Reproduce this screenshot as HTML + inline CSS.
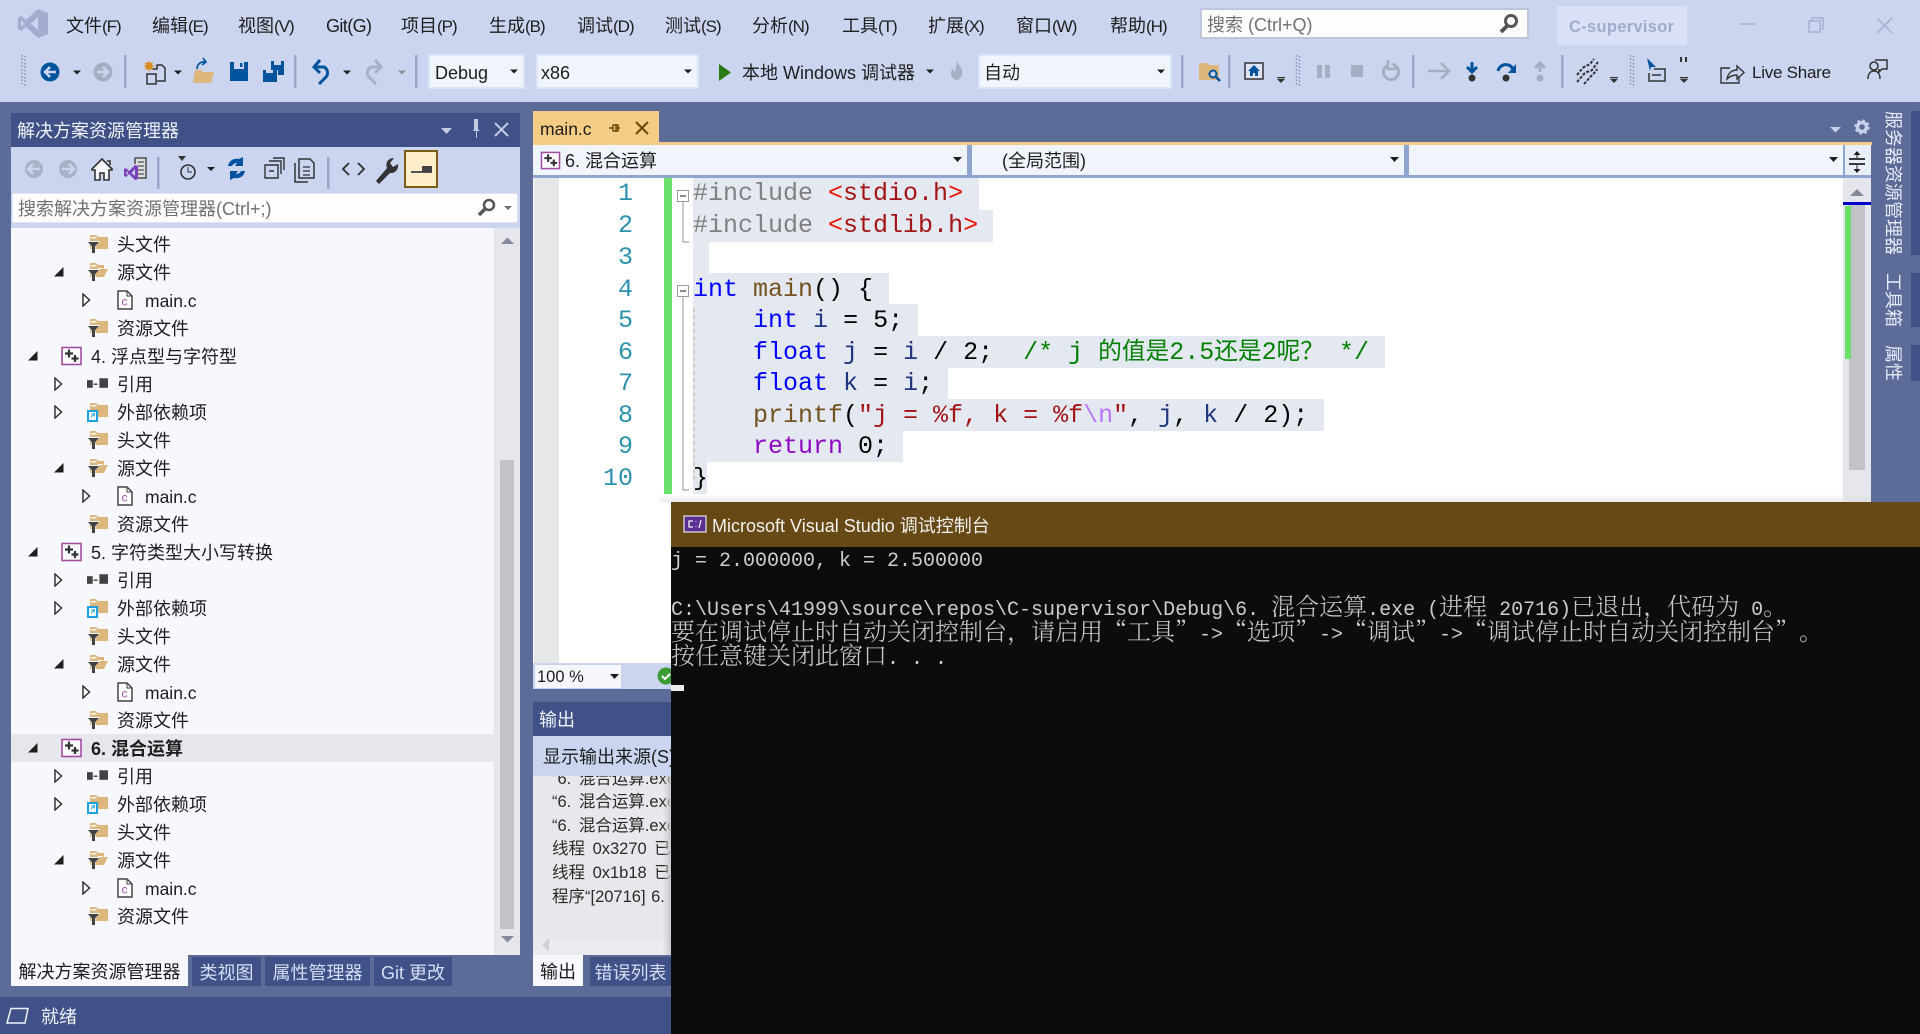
<!DOCTYPE html>
<html lang="zh-CN"><head><meta charset="utf-8"><title>C-supervisor</title>
<style>
html,body{margin:0;padding:0;width:1920px;height:1034px;overflow:hidden;background:#5d6b99}
body{position:relative;font-family:"Liberation Sans","Noto Sans CJK SC",sans-serif;font-size:18px;color:#1e1e1e;text-spacing-trim:space-all}
div,svg,b.a{position:absolute}
.t{position:absolute;white-space:nowrap;line-height:28px;height:28px;transform:translateY(1px)}
.t u{text-decoration:none;font-size:17px;letter-spacing:-1px}
.t u.gt{font-size:18px;letter-spacing:-.6px}
.m{top:11px}
.w{color:#f0f3fb}
.r{left:0;width:483px;height:28px}
.r svg{position:absolute;overflow:visible}
.r span{position:absolute;top:1px;line-height:28px;white-space:nowrap}
.a1{left:17px;top:9px}.a2{left:43px;top:9px}.a3{left:71px;top:7px}
.r .a2.c2{top:7px}
.i1{left:76px;top:4px;width:21px;height:20px}
.i2{left:106px;top:4px;width:16px;height:20px}
.ip{left:50px;top:4px;width:21px;height:20px}
.l1{left:106px}.l2{left:134px;font-size:17.5px}.lp{left:80px}
.sel{position:absolute;background:#e4e8f0;left:693px;height:32px}
.ln{position:absolute;left:590px;width:43px;text-align:right;color:#2b91af;font:25px/31.5px "Liberation Mono",monospace}
.cd{position:absolute;left:693px;white-space:pre;font:25px/31.5px "Liberation Mono","Noto Sans CJK SC",monospace;color:#000}
.cd i{font-style:normal;font-family:"Noto Sans CJK SC",sans-serif;font-size:23.7px;line-height:0}
.g{color:#808080}.rd{color:#e51400}.s{color:#a31515}.k{color:#0000ff}.f{color:#74531f}.v{color:#1f377f}.c{color:#008000}.p{color:#8f08c4}.e{color:#b776fb}
.tab{position:absolute;background:#3f5187;color:#d6def5;top:957px;height:29px;line-height:33px;text-align:center;white-space:nowrap}
.o{position:absolute;left:19px;white-space:nowrap;font-size:16.5px;line-height:24px;word-spacing:3px;color:#2a2a2a;transform:translateY(1px)}
.con{position:absolute;left:0;white-space:pre;font:20px/24px "Liberation Mono",monospace;color:#cccccc}
.con i{font-style:normal;font-family:"Noto Serif CJK SC",serif;font-size:24px;font-weight:300;line-height:0}
.vt{position:absolute;left:1881px;writing-mode:vertical-rl;text-orientation:sideways;line-height:24px;color:#e8ecf8;white-space:nowrap}
.st{position:absolute;left:1911px;width:9px;background:#3f5187}
</style></head><body>
<svg width="0" height="0" style="position:absolute"><defs>
<symbol id="ff" viewBox="0 0 21 20"><path d="M3 1h6l2 2h10v12H3z" fill="#dcb67a"/><path d="M4 3h5l1 1.500H4z" fill="#f6f8fe"/><path d="M0 7h13L8.500 12.500V20h-4v-7.500z" fill="#f6f8fe"/><path d="M1 8h11L8 12.500V19H5v-6.500z" fill="#424242"/></symbol>
<symbol id="fo" viewBox="0 0 21 20"><path d="M3 1h6l2 2h6v4h4l-4 8H3z" fill="#dcb67a"/><path d="M4 3h5l1 1.500H4zM11 6h5v1h-5z" fill="#f6f8fe"/><path d="M0 7h13L8.500 12.500V20h-4v-7.500z" fill="#f6f8fe"/><path d="M1 8h11L8 12.500V19H5v-6.500z" fill="#424242"/></symbol>
<symbol id="fe" viewBox="0 0 21 20"><path d="M3 1h6l2 2h10v12H3z" fill="#dcb67a"/><path d="M4 3h5l1 1.500H4z" fill="#f6f8fe"/><rect x="0" y="8" width="11" height="11" fill="#f6f8fe"/><rect x="1" y="9" width="9" height="10" fill="#fff" stroke="#1ba1e2" stroke-width="2"/><path d="M4 15l3-3M4.500 11.800H7.300V14.500" stroke="#1ba1e2" fill="none"/></symbol>
<symbol id="rf" viewBox="0 0 22 20"><rect x="0" y="6" width="6" height="8" fill="#424242"/><rect x="7" y="9.500" width="4" height="1.500" fill="#424242"/><rect x="13" y="4" width="9" height="10" fill="#424242"/></symbol>
<symbol id="fc" viewBox="0 0 16 20"><path d="M1 1h9l5 5v13H1z" fill="#fff" stroke="#424242" stroke-width="1.500"/><path d="M10 1v5h5" fill="none" stroke="#424242"/><text x="4.500" y="15.500" font-size="12" fill="#a64ca6" font-family="Liberation Sans">c</text></symbol>
<symbol id="pj" viewBox="0 0 21 20"><rect x="1" y="1.500" width="19" height="17" fill="#fdfdff" stroke="#a04ca0" stroke-width="1.600"/><path d="M8 3.500v8M4 7.500h8M14 9v7M10.500 12.500h7" stroke="#333" stroke-width="2.200"/></symbol>
<symbol id="ex" viewBox="0 0 10 10"><path d="M0 9.500L9.500 0v9.500z" fill="#1e1e1e"/></symbol>
<symbol id="cl" viewBox="0 0 9 14"><path d="M1 1l6.500 6L1 13z" fill="#fff" stroke="#333" stroke-width="1.500"/></symbol>
</defs></svg>

<div style="left:0;top:0;width:1920px;height:102px;background:#ccd5f0"></div>

<span class="t m" style="left:66px">文件<u>(F)</u></span>
<span class="t m" style="left:152px">编辑<u>(E)</u></span>
<span class="t m" style="left:238px">视图<u>(V)</u></span>
<span class="t m" style="left:326px"><u class="gt">Git(G)</u></span>
<span class="t m" style="left:401px">项目<u>(P)</u></span>
<span class="t m" style="left:489px">生成<u>(B)</u></span>
<span class="t m" style="left:577px">调试<u>(D)</u></span>
<span class="t m" style="left:665px">测试<u>(S)</u></span>
<span class="t m" style="left:752px">分析<u>(N)</u></span>
<span class="t m" style="left:842px">工具<u>(T)</u></span>
<span class="t m" style="left:928px">扩展<u>(X)</u></span>
<span class="t m" style="left:1016px">窗口<u>(W)</u></span>
<span class="t m" style="left:1110px">帮助<u>(H)</u></span>

<div style="left:1200px;top:8px;width:325px;height:27px;background:#fdfdfe;border:2px solid #bdc6dc"></div>
<span class="t" style="left:1207px;top:10px;color:#717171">搜索 (Ctrl+Q)</span>
<div style="left:1557px;top:6px;width:130px;height:39px;background:#dae0f8"></div>
<span class="t" style="left:1569px;top:12px;color:#a2acca;letter-spacing:.3px;font-size:16.5px;font-weight:bold">C-supervisor</span>

<svg style="left:0;top:0" width="1920" height="102" viewBox="0 0 1920 102">
<path fill-rule="evenodd" fill="#a3add0" d="M38 9L48 13V34L38 38L26 27L21 31L18 29V18L21 16L26 20ZM38 17L31 23.500L38 30ZM21 20V27L24.500 23.500Z"/>
<g fill="none" stroke="#555" stroke-width="3"><circle cx="1511" cy="21" r="5.500"/><path d="M1507 26l-6 6" stroke-width="4"/></g>
<g stroke="#a6b0cf" stroke-width="1.500" fill="none"><path d="M1740 24h15"/><path d="M1809 21h11v11h-11zM1812 21v-3h11v11h-3"/><path d="M1877 18l15 15M1892 18l-15 15"/></g>
<g fill="none" stroke="#858fb0" stroke-width="1.500" stroke-dasharray="1.500 2"><path d="M22 55v30M25 56v30M1296.500 55v30M1299.500 56v30M1630.500 55v30M1633.500 56v30"/></g>
<g fill="#9aa8cc"><rect x="124" y="55" width="2.500" height="33"/><rect x="294" y="55" width="2.500" height="33"/><rect x="415" y="55" width="2.500" height="33"/><rect x="1181" y="55" width="2.500" height="33"/><rect x="1228" y="55" width="2.500" height="33"/><rect x="1412" y="55" width="2.500" height="33"/><rect x="1561" y="55" width="2.500" height="33"/></g>
<circle cx="50" cy="72" r="9.500" fill="#00539c"/><path d="M56 72H46M50 67l-5 5 5 5" stroke="#ccd5f0" stroke-width="2.600" fill="none"/>
<circle cx="103" cy="72" r="9.500" fill="#a6aec4"/><path d="M97 72h10M103 67l5 5-5 5" stroke="#ccd5f0" stroke-width="2.600" fill="none"/>
<g fill="#1e1e1e"><path d="M73 70.500h8l-4 4zM174 70.500h8l-4 4zM343 70.500h8l-4 4z"/></g>
<path d="M398 70.500h8l-4 4z" fill="#8e8e8e"/>
<g><path d="M152 69h5v-4h5l3 3v13h-8M147 74h9v10h-9z" fill="#ccd5f0" stroke="#333" stroke-width="1.500"/><path d="M149 60l1 3 3-1-1 3 3 1-3 1 1 3-3-1-1 3-1-3-3 1 1-3-3-1 3-1-1-3 3 1z" fill="#d98a1f"/></g>
<path d="M195 70h6l2 2h11l-3 11h-18z" fill="#dcb67a"/><path d="M197 69c0-5 4-8 9-7M203 58l3 4-4 3" fill="none" stroke="#00539c" stroke-width="1.700"/>
<path d="M230 62h18v19h-18z" fill="#00539c"/><path d="M234 62h10v7h-10z" fill="#ccd5f0"/><rect x="240" y="63" width="2.500" height="4" fill="#00539c"/>
<path d="M263 70h14v12h-14z" fill="#00539c"/><path d="M271 61h13v14h-6v-5h-7z" fill="#00539c"/><path d="M266 70h7v3h-7zM274 61h7v4h-7z" fill="#ccd5f0"/>
<path d="M314 67h10a6.500 6.500 0 0 1 2 10l-7 7M320 60l-6 7 6 6" fill="none" stroke="#00539c" stroke-width="3"/>
<path d="M381 67h-10a6.500 6.500 0 0 0-2 10l7 7M375 60l6 7-6 6" fill="none" stroke="#a9b1c6" stroke-width="3"/>
<path d="M719 64l12 8.500-12 8.500z" fill="#2a7a14"/>
<path d="M957 61c1 4 6 6 5 13-.5 4-3 6-5 6s-6-2-6-6c0-3 1-5 2-6 0 2 1 3 2 3 1-3 1-6 2-10z" fill="#a8b0c6"/>
<path d="M1199 63h8l2 2h10v15h-20z" fill="#dcb67a"/><circle cx="1213" cy="74" r="3.500" fill="#ccd5f0" stroke="#00539c" stroke-width="2"/><path d="M1216 77l4 4" stroke="#00539c" stroke-width="2.500"/>
<rect x="1245" y="63" width="18" height="16" fill="#dfe5f7" stroke="#333" stroke-width="1.500"/><path d="M1254 65l-6 6h2v5h3v-3h2v3h3v-5h2z" fill="#00539c"/>
<g fill="#333"><path d="M1277 79h8l-4 4z"/><rect x="1277" y="77" width="8" height="1.300"/><path d="M1610 79h8l-4 4zM1680 79h8l-4 4z"/><rect x="1610" y="77" width="8" height="1.300"/><rect x="1680" y="77" width="8" height="1.300"/><rect x="1680" y="57" width="2" height="5"/><rect x="1685" y="57" width="2" height="5"/></g>
<g fill="#a6aec4"><rect x="1317" y="65" width="5" height="13"/><rect x="1325" y="65" width="5" height="13"/><rect x="1351" y="65" width="12" height="12"/></g>
<circle cx="1391" cy="72" r="7.500" fill="none" stroke="#a6aec4" stroke-width="3"/><path d="M1388 60v9h8" fill="#ccd5f0" stroke="#a6aec4" stroke-width="2.500"/>
<path d="M1428 71h20M1441 63l8 8-8 8" fill="none" stroke="#a6aec4" stroke-width="2.600"/>
<circle cx="1472" cy="78" r="3.500" fill="#333"/><path d="M1472 62v9M1467 67l5 5 5-5" fill="none" stroke="#00539c" stroke-width="3"/>
<circle cx="1506" cy="78" r="3.500" fill="#333"/><path d="M1498 71a8 8 0 0 1 15-2" fill="none" stroke="#00539c" stroke-width="3"/><path d="M1516 64v9h-8z" fill="#00539c"/>
<circle cx="1540" cy="78" r="3.500" fill="#a6aec4"/><path d="M1540 72v-9M1535 68l5-5 5 5" fill="none" stroke="#a6aec4" stroke-width="3"/>
<g stroke="#333" stroke-width="2" stroke-dasharray="3 1.500" fill="none"><path d="M1577 82l7-8c2-3 6-2 8-4l6-8M1577 75l5-6c2-3 5-3 8-5l4-5M1584 84l8-9c2-2 4-3 5-6"/></g>
<path d="M1647 58l9 9h-5l-1 4z" fill="#00539c"/><path d="M1654 69h11v12h-16v-8" fill="none" stroke="#333" stroke-width="1.500"/><path d="M1652 75h9" stroke="#333" stroke-width="1.500"/>
<path d="M1730 68h-9v15h18v-7M1727 79c1-6 5-9 10-9v-4l7 6.500-7 6.500v-4c-4 0-7 1-10 4z" fill="none" stroke="#333" stroke-width="1.400"/>
<circle cx="1874" cy="66" r="4" fill="none" stroke="#333" stroke-width="1.500"/><path d="M1868 79c0-6 3-8 6-8s6 2 6 8M1875 60h12v9h-5l-3 3v-3" fill="none" stroke="#333" stroke-width="1.500"/>
</svg>

<div style="left:428px;top:54px;width:93px;height:31px;background:#f0f4fd;border:2px solid #dce4f8"></div>
<span class="t" style="left:435px;top:58px">Debug</span>
<div style="left:536px;top:54px;width:159px;height:31px;background:#f0f4fd;border:2px solid #dce4f8"></div>
<span class="t" style="left:541px;top:58px">x86</span>
<span class="t" style="left:742px;top:58px">本地 Windows 调试器</span>
<div style="left:978px;top:54px;width:190px;height:31px;background:#f0f4fd;border:2px solid #dce4f8"></div>
<span class="t" style="left:984px;top:58px">自动</span>
<span class="t" style="left:1752px;top:58px;font-size:17px;letter-spacing:-.25px">Live Share</span>
<svg style="left:0;top:0" width="1200" height="102"><path d="M510 69.500h8l-4 4zM684 69.500h8l-4 4zM926 69.500h8l-4 4zM1157 69.500h8l-4 4z" fill="#1e1e1e"/></svg>

<!-- Solution explorer -->
<div style="left:11px;top:113px;width:509px;height:34px;background:#3f5187"></div>
<span class="t w" style="left:17px;top:116px">解决方案资源管理器</span>
<svg style="left:430px;top:113px" width="90" height="34"><path d="M11 15h11l-5.500 6z" fill="#c3cbe4"/><path d="M42 6h6v10l2 2h-3v7h-1v-7h-3l1-2V6h-2z" fill="#c3cbe4"/><path d="M65 10l13 13M78 10L65 23" stroke="#c3cbe4" stroke-width="2"/></svg>
<div style="left:11px;top:147px;width:509px;height:81px;background:#ccd5f0"></div>
<div style="left:404px;top:150px;width:30px;height:34px;background:#ffeec9;border:2px solid #7c5c10"></div>
<svg style="left:11px;top:147px" width="509" height="46">
<g><circle cx="23" cy="22" r="9" fill="#a9b1c6"/><path d="M29 22h-10M22 17l-5 5 5 5" stroke="#ccd5f0" stroke-width="2.400" fill="none"/><circle cx="57" cy="22" r="9" fill="#a9b1c6"/><path d="M51 22h10M58 17l5 5-5 5" stroke="#ccd5f0" stroke-width="2.400" fill="none"/></g>
<path d="M91 12L81 22v1h3v10h5v-7h4v7h5V23h3v-1zM96 14h3v4" fill="#f4f6fc" stroke="#333" stroke-width="1.600"/>
<path d="M124 17v-6h11v20h-9" fill="#ddd" stroke="#333" stroke-width="1.300"/><path d="M127 15h6M127 19h6M127 23h6M127 27h6" stroke="#333"/>
<path d="M113 22l2-1 3 3 6-6 3 1v13l-3 1-6-6-3 3-2-1zM115.500 24v4l2-2zM124 22l-3.500 4 3.500 3z" fill="#7b3fb8" fill-rule="evenodd"/>
<rect x="146" y="10" width="2.500" height="32" fill="#9aa8cc"/>
<path d="M167 9h8l-4 5z" fill="#333"/><circle cx="177" cy="25" r="7" fill="none" stroke="#333" stroke-width="1.600"/><path d="M177 20v5h4" stroke="#333" fill="none"/><path d="M196 20h8l-4 4z" fill="#1e1e1e"/>
<path d="M217 19c1-5 5-8 11-7l4-2v9h-8l2-3c-2 0-4 1-5 3zM234 24c-1 5-5 8-11 7l-4 2v-9h8l-2 3c2 0 4-1 5-3z" fill="#00539c"/>
<path d="M254 18h13v13h-13zM258 14h12v13M262 11h11v12" fill="none" stroke="#333" stroke-width="1.400"/><path d="M258 24h5" stroke="#333" stroke-width="1.500"/>
<path d="M288 12h11l4 4v15h-15zM284 16v19h13" fill="none" stroke="#333" stroke-width="1.500"/><path d="M292 20h7M292 24h7M292 28h7" stroke="#333" stroke-width="1.300"/>
<rect x="316" y="10" width="2.500" height="32" fill="#9aa8cc"/>
<path d="M338 16l-6 6 6 6M347 16l6 6-6 6" fill="none" stroke="#333" stroke-width="1.900"/>
<path d="M365 34l11-13c-2-5 1-10 7-10l-4 5 3 4 5-3c1 5-3 10-8 9l-11 11z" fill="#333"/>
</svg>
<div style="left:411px;top:171px;width:21px;height:2px;background:#555"></div>
<div style="left:422px;top:166px;width:10px;height:6px;background:#424242"></div>
<div style="left:12px;top:193px;width:504px;height:28px;background:#fdfdfe;border:1px solid #dfe5f5"></div>
<span class="t" style="left:18px;top:194px;color:#717171">搜索解决方案资源管理器(Ctrl+;)</span>
<svg style="left:470px;top:195px" width="50" height="26"><circle cx="19" cy="10" r="5" fill="none" stroke="#555" stroke-width="2.500"/><path d="M15 14l-6 6" stroke="#555" stroke-width="3.500"/><path d="M34 11h8l-4 4z" fill="#707070"/></svg>

<div style="left:11px;top:228px;width:483px;height:727px;background:#f6f8fe"></div>
<div style="left:494px;top:228px;width:26px;height:727px;background:#e6e7ed"></div>
<div style="left:500px;top:460px;width:14px;height:469px;background:#c2c3c9"></div>
<svg style="left:494px;top:228px" width="26" height="727"><path d="M7 16l6.500-6.500L20 16z" fill="#868999"/><path d="M7 708l6.500 6.500L20 708z" fill="#868999"/></svg>
<div style="left:11px;top:734px;width:483px;height:28px;background:#e6e7ed"></div>

<div style="left:11px;top:230px;width:483px;height:725px;overflow:hidden">
<div class="r" style="top:0"><svg class="i1"><use href="#ff"/></svg><span class="l1">头文件</span></div>
<div class="r" style="top:28px"><svg class="a2" width="10" height="10"><use href="#ex"/></svg><svg class="i1"><use href="#fo"/></svg><span class="l1">源文件</span></div>
<div class="r" style="top:56px"><svg class="a3" width="9" height="14"><use href="#cl"/></svg><svg class="i2"><use href="#fc"/></svg><span class="l2">main.c</span></div>
<div class="r" style="top:84px"><svg class="i1"><use href="#ff"/></svg><span class="l1">资源文件</span></div>
<div class="r" style="top:112px"><svg class="a1" width="10" height="10"><use href="#ex"/></svg><svg class="ip"><use href="#pj"/></svg><span class="lp">4. 浮点型与字符型</span></div>
<div class="r" style="top:140px"><svg class="a2 c2" width="9" height="14"><use href="#cl"/></svg><svg class="i1"><use href="#rf"/></svg><span class="l1">引用</span></div>
<div class="r" style="top:168px"><svg class="a2 c2" width="9" height="14"><use href="#cl"/></svg><svg class="i1"><use href="#fe"/></svg><span class="l1">外部依赖项</span></div>
<div class="r" style="top:196px"><svg class="i1"><use href="#ff"/></svg><span class="l1">头文件</span></div>
<div class="r" style="top:224px"><svg class="a2" width="10" height="10"><use href="#ex"/></svg><svg class="i1"><use href="#fo"/></svg><span class="l1">源文件</span></div>
<div class="r" style="top:252px"><svg class="a3" width="9" height="14"><use href="#cl"/></svg><svg class="i2"><use href="#fc"/></svg><span class="l2">main.c</span></div>
<div class="r" style="top:280px"><svg class="i1"><use href="#ff"/></svg><span class="l1">资源文件</span></div>
<div class="r" style="top:308px"><svg class="a1" width="10" height="10"><use href="#ex"/></svg><svg class="ip"><use href="#pj"/></svg><span class="lp">5. 字符类型大小写转换</span></div>
<div class="r" style="top:336px"><svg class="a2 c2" width="9" height="14"><use href="#cl"/></svg><svg class="i1"><use href="#rf"/></svg><span class="l1">引用</span></div>
<div class="r" style="top:364px"><svg class="a2 c2" width="9" height="14"><use href="#cl"/></svg><svg class="i1"><use href="#fe"/></svg><span class="l1">外部依赖项</span></div>
<div class="r" style="top:392px"><svg class="i1"><use href="#ff"/></svg><span class="l1">头文件</span></div>
<div class="r" style="top:420px"><svg class="a2" width="10" height="10"><use href="#ex"/></svg><svg class="i1"><use href="#fo"/></svg><span class="l1">源文件</span></div>
<div class="r" style="top:448px"><svg class="a3" width="9" height="14"><use href="#cl"/></svg><svg class="i2"><use href="#fc"/></svg><span class="l2">main.c</span></div>
<div class="r" style="top:476px"><svg class="i1"><use href="#ff"/></svg><span class="l1">资源文件</span></div>
<div class="r" style="top:504px"><svg class="a1" width="10" height="10"><use href="#ex"/></svg><svg class="ip"><use href="#pj"/></svg><span class="lp" style="font-weight:bold">6. 混合运算</span></div>
<div class="r" style="top:532px"><svg class="a2 c2" width="9" height="14"><use href="#cl"/></svg><svg class="i1"><use href="#rf"/></svg><span class="l1">引用</span></div>
<div class="r" style="top:560px"><svg class="a2 c2" width="9" height="14"><use href="#cl"/></svg><svg class="i1"><use href="#fe"/></svg><span class="l1">外部依赖项</span></div>
<div class="r" style="top:588px"><svg class="i1"><use href="#ff"/></svg><span class="l1">头文件</span></div>
<div class="r" style="top:616px"><svg class="a2" width="10" height="10"><use href="#ex"/></svg><svg class="i1"><use href="#fo"/></svg><span class="l1">源文件</span></div>
<div class="r" style="top:644px"><svg class="a3" width="9" height="14"><use href="#cl"/></svg><svg class="i2"><use href="#fc"/></svg><span class="l2">main.c</span></div>
<div class="r" style="top:672px"><svg class="i1"><use href="#ff"/></svg><span class="l1">资源文件</span></div>
</div>

<div class="tab" style="left:11px;top:955px;width:177px;height:31px;line-height:35px;background:#f6f8fe;color:#1e1e1e">解决方案资源管理器</div>
<div class="tab" style="left:192px;width:69px">类视图</div>
<div class="tab" style="left:265px;width:105px">属性管理器</div>
<div class="tab" style="left:374px;width:78px">Git 更改</div>

<!-- Editor -->
<div style="left:533px;top:111px;width:126px;height:31px;background:#f5cc84"></div>
<div style="left:533px;top:142px;width:1339px;height:3px;background:#f5cc84"></div>
<span class="t" style="left:540px;top:114px;font-size:17.5px">main.c</span>
<svg style="left:605px;top:113px" width="55" height="30"><path d="M4 15h4M11 11v8M11 15h4" fill="none" stroke="#6d4c10" stroke-width="1.500"/><rect x="8" y="12" width="5" height="6" fill="none" stroke="#6d4c10" stroke-width="1.500"/><path d="M31 9l12 12M43 9L31 21" stroke="#6d4c10" stroke-width="2.200"/></svg>
<svg style="left:1825px;top:115px" width="50" height="26"><path d="M5 12h11l-5.500 5.500z" fill="#c8d1ea"/><circle cx="37" cy="12" r="4.500" fill="none" stroke="#c8d1ea" stroke-width="3.500"/><circle cx="37" cy="12" r="6.700" fill="none" stroke="#c8d1ea" stroke-width="2" stroke-dasharray="2.500 2.800"/></svg>

<div style="left:533px;top:145px;width:1338px;height:33px;background:#8fa4d0"></div>
<div style="left:533px;top:145px;width:434px;height:30px;background:#f0f4fd"></div>
<div style="left:972px;top:145px;width:432px;height:30px;background:#f0f4fd"></div>
<div style="left:1409px;top:145px;width:434px;height:30px;background:#f0f4fd"></div>
<div style="left:1845px;top:145px;width:26px;height:30px;background:#e9eefb"></div>
<svg style="left:539px;top:151px" width="23" height="19"><use href="#pj" width="23" height="19"/></svg>
<span class="t" style="left:565px;top:146px">6. 混合运算</span>
<span class="t" style="left:1002px;top:146px">(全局范围)</span>
<svg style="left:950px;top:155px" width="16" height="10"><path d="M3 2h9l-4.500 5z" fill="#1e1e1e"/></svg>
<svg style="left:1387px;top:155px" width="16" height="10"><path d="M3 2h9l-4.500 5z" fill="#1e1e1e"/></svg>
<svg style="left:1826px;top:155px" width="16" height="10"><path d="M3 2h9l-4.500 5z" fill="#1e1e1e"/></svg>
<svg style="left:1848px;top:150px" width="20" height="26"><path d="M1 9h16M1 14h16" stroke="#1e1e1e" stroke-width="1.800"/><path d="M9 1l-3.500 4h7zM9 23l-3.500-4h7z" fill="#1e1e1e"/><path d="M9 4v4M9 15v5" stroke="#1e1e1e"/></svg>

<div style="left:533px;top:178px;width:1310px;height:485px;background:#fff"></div>
<div style="left:534px;top:178px;width:25px;height:485px;background:#e6e7e9"></div>
<div style="left:664px;top:178px;width:8px;height:316px;background:#6be16b"></div>

<div class="sel" style="top:178px;width:286px"></div>
<div class="sel" style="top:209.500px;width:300px"></div>
<div class="sel" style="top:241px;width:16px"></div>
<div class="sel" style="top:272.500px;width:196px"></div>
<div class="sel" style="top:304px;width:225px"></div>
<div class="sel" style="top:335.500px;width:692px"></div>
<div class="sel" style="top:367px;width:255px"></div>
<div class="sel" style="top:398.500px;width:631px"></div>
<div class="sel" style="top:430px;width:210px"></div>
<div class="sel" style="top:461.500px;width:14px"></div>

<svg style="left:670px;top:178px" width="30" height="320">
<g fill="#fff" stroke="#9b9b9b" stroke-width="1"><rect x="7.500" y="12.500" width="11" height="11"/><rect x="7.500" y="107.500" width="11" height="11"/></g>
<path d="M10 18h6M10 113h6" stroke="#444" stroke-width="1.300"/>
<path d="M13 24v40h6M13 119v193h6" fill="none" stroke="#a5a5a5" stroke-width="1.200"/>
<path d="M24 130v172" stroke="#c6c6c6" stroke-width="1.500" stroke-dasharray="4 3"/>
</svg>

<div class="ln" style="top:178px">1</div><div class="ln" style="top:210px">2</div><div class="ln" style="top:242px">3</div><div class="ln" style="top:274px">4</div><div class="ln" style="top:305px">5</div><div class="ln" style="top:337px">6</div><div class="ln" style="top:368px">7</div><div class="ln" style="top:400px">8</div><div class="ln" style="top:431px">9</div><div class="ln" style="top:463px">10</div>

<div class="cd" style="top:178px"><span class="g">#include </span><span class="rd">&lt;</span><span class="s">stdio.h</span><span class="rd">&gt;</span></div>
<div class="cd" style="top:210px"><span class="g">#include </span><span class="rd">&lt;</span><span class="s">stdlib.h</span><span class="rd">&gt;</span></div>
<div class="cd" style="top:274px"><span class="k">int</span> <span class="f">main</span>() {</div>
<div class="cd" style="top:305px">    <span class="k">int</span> <span class="v">i</span> = 5;</div>
<div class="cd" style="top:337px">    <span class="k">float</span> <span class="v">j</span> = <span class="v">i</span> / 2;  <span class="c">/* j <i>的值是</i>2.5<i>还是</i>2<i>呢？</i> */</span></div>
<div class="cd" style="top:368px">    <span class="k">float</span> <span class="v">k</span> = <span class="v">i</span>;</div>
<div class="cd" style="top:400px">    <span class="f">printf</span>(<span class="s">"j = %f, k = %f</span><span class="e">\n</span><span class="s">"</span>, <span class="v">j</span>, <span class="v">k</span> / 2);</div>
<div class="cd" style="top:431px">    <span class="p">return</span> 0;</div>
<div class="cd" style="top:463px">}</div>

<div style="left:1843px;top:178px;width:28px;height:324px;background:#e6e7ed"></div>
<div style="left:1849px;top:205px;width:16px;height:265px;background:#c2c3c9"></div>
<div style="left:1845px;top:206px;width:6px;height:153px;background:#6be16b"></div>
<div style="left:1843px;top:202px;width:28px;height:3px;background:#0000cd"></div>
<svg style="left:1843px;top:183px" width="28" height="16"><path d="M7 13L14 6l7 7z" fill="#868999"/></svg>

<div class="vt" style="top:111px">服务器资源管理器</div><div class="st" style="top:111px;height:144px"></div>
<div class="vt" style="top:273px">工具箱</div><div class="st" style="top:273px;height:54px"></div>
<div class="vt" style="top:345px">属性</div><div class="st" style="top:345px;height:36px"></div>

<!-- lower-editor status -->
<div style="left:533px;top:663px;width:138px;height:26px;background:#ccd5f0"></div>
<div style="left:534px;top:664px;width:86px;height:23px;background:#f6f8fe;border:1px solid #c8d2ee"></div>
<span class="t" style="left:537px;top:662px;font-size:16.5px">100 %</span>
<svg style="left:608px;top:672px" width="14" height="10"><path d="M2 2h9l-4.500 5z" fill="#1e1e1e"/></svg>
<svg style="left:657px;top:667px" width="14" height="18"><circle cx="9" cy="9" r="8.500" fill="#3a9b35"/><path d="M5 9l3 3 5-5" stroke="#fff" stroke-width="2" fill="none"/></svg>

<!-- Output -->
<div style="left:533px;top:702px;width:138px;height:34px;background:#3f5187"></div>
<span class="t w" style="left:539px;top:705px">输出</span>
<div style="left:533px;top:736px;width:138px;height:40px;background:#ccd5f0"></div>
<span class="t" style="left:543px;top:742px;white-space:nowrap;width:128px;overflow:hidden">显示输出来源(S)</span>
<div style="left:533px;top:776px;width:138px;height:179px;background:#e7e8ec;overflow:hidden">
<div class="o" style="top:-10px">“6. 混合运算.exe”</div>
<div class="o" style="top:13px">“6. 混合运算.exe”(Win32)</div>
<div class="o" style="top:37px">“6. 混合运算.exe”(Win32)</div>
<div class="o" style="top:60px">线程 0x3270 已退出</div>
<div class="o" style="top:84px">线程 0x1b18 已退出</div>
<div class="o" style="top:108px;word-spacing:1px">程序“[20716] 6. 混合运算</div>
<div style="left:0;top:164px;width:138px;height:15px;background:#eaebef"></div>
<svg style="left:8px;top:161px" width="12" height="18"><path d="M8 1L1 8l7 7z" fill="#ced0d6"/></svg>
</div>
<div class="tab" style="left:533px;top:955px;width:50px;height:31px;line-height:35px;background:#f6f8fe;color:#1e1e1e">输出</div>
<div class="tab" style="left:590px;width:81px;overflow:hidden">错误列表</div>

<!-- Status bar -->
<div style="left:0;top:997px;width:671px;height:37px;background:#3f5187"></div>
<svg style="left:5px;top:1007px" width="26" height="18"><path d="M6 1.500h17L20 16H2z" fill="none" stroke="#eef1fa" stroke-width="1.500"/></svg>
<span class="t w" style="left:41px;top:1002px">就绪</span>

<!-- Console -->
<div style="left:660px;top:494px;width:1211px;height:8px;background:linear-gradient(#ffffff00,#d8d8d880)"></div>
<div style="left:663px;top:776px;width:8px;height:179px;background:linear-gradient(90deg,#e7e8ec00,#c8c8cc)"></div>
<div style="left:671px;top:502px;width:1249px;height:45px;background:#664914"></div>
<div style="left:671px;top:547px;width:1249px;height:487px;background:#0c0c0c">
<div class="con" style="top:3px">j = 2.000000, k = 2.500000</div>
<div class="con" style="top:52px">C:\Users\41999\source\repos\C-supervisor\Debug\6. <i>混合运算</i>.exe (<i>进程</i> 20716)<i>已退出，代码为</i> 0<i>。</i></div>
<div class="con" style="top:77px"><i>要在调试停止时自动关闭控制台，请启用“工具”</i>-&gt;<i>“选项”</i>-&gt;<i>“调试”</i>-&gt;<i>“调试停止时自动关闭控制台”。</i></div>
<div class="con" style="top:101px"><i>按任意键关闭此窗口</i>. . .</div>
<div style="left:0;top:138px;width:13px;height:6px;background:#eeeeee"></div>
</div>
<svg style="left:683px;top:515px" width="24" height="18"><rect x="1" y="1" width="22" height="16" fill="#5a2d91" stroke="#c8c8c8" stroke-width="1.500"/><path d="M10 6H6v6h4M13 6v.8M13 11v.8M18 5l-2 8" fill="none" stroke="#f0f0f0" stroke-width="1.300"/></svg>
<span class="t" style="left:712px;top:511px;color:#f2f2f2">Microsoft Visual Studio 调试控制台</span>
</body></html>
